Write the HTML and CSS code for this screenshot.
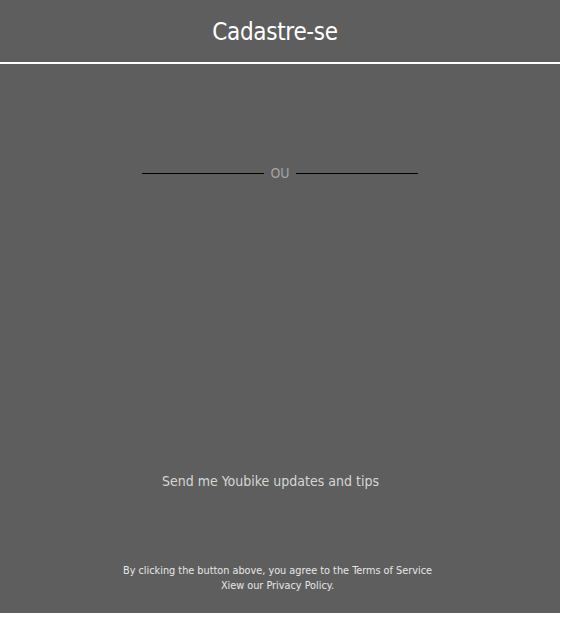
FILE: index.html
```html
<!DOCTYPE html>
<html lang="pt">
<head>
<meta charset="utf-8">
<title>Cadastre-se</title>
<link rel="stylesheet" href="styles.css">
</head>
<body>
<div class="page">
  <header class="header">
    <h1 class="title">Cadastre-se</h1>
  </header>
  <main class="content">
    <div class="divider">
      <span class="divider-line"></span>
      <span class="divider-text">OU</span>
      <span class="divider-line"></span>
    </div>
    <p class="updates">Send me Youbike updates and tips</p>
    <p class="legal">By clicking the button above, you agree to the Terms of Service<br>Xiew our Privacy Policy.</p>
  </main>
</div>
</body>
</html>
```
FILE: styles.css
```css
html, body {
  margin: 0;
  padding: 0;
  background: #ffffff;
}
body {
  font-family: "DejaVu Sans Condensed", "DejaVu Sans", sans-serif;
  font-stretch: condensed;
}
.page {
  width: 560px;
  height: 613px;
  background: #5e5e5e;
  display: flex;
  flex-direction: column;
}
.header {
  height: 62px;
  border-bottom: 2px solid #ffffff;
  display: flex;
  align-items: center;
  justify-content: center;
}
.title {
  margin: 0;
  padding: 2px 10px 0 0;
  font-size: 24px;
  font-weight: normal;
  color: #ffffff;
  letter-spacing: -0.3px;
}
.content {
  flex: 1;
  display: flex;
  flex-direction: column;
  align-items: center;
}
.divider {
  margin-top: 101px;
  height: 16px;
  display: flex;
  align-items: center;
  gap: 6px;
}
.divider-line {
  width: 122px;
  height: 1px;
  background: #000000;
}
.divider-text {
  font-size: 14px;
  color: #a3a3a3;
}
.updates {
  margin: 292px 0 0;
  padding-right: 19px;
  font-size: 14px;
  line-height: 16px;
  color: #d6d6d6;
}
.legal {
  margin: 74px 0 0;
  padding-right: 5px;
  font-size: 10.8px;
  line-height: 15px;
  text-align: center;
  color: #e6e6e6;
}
```
